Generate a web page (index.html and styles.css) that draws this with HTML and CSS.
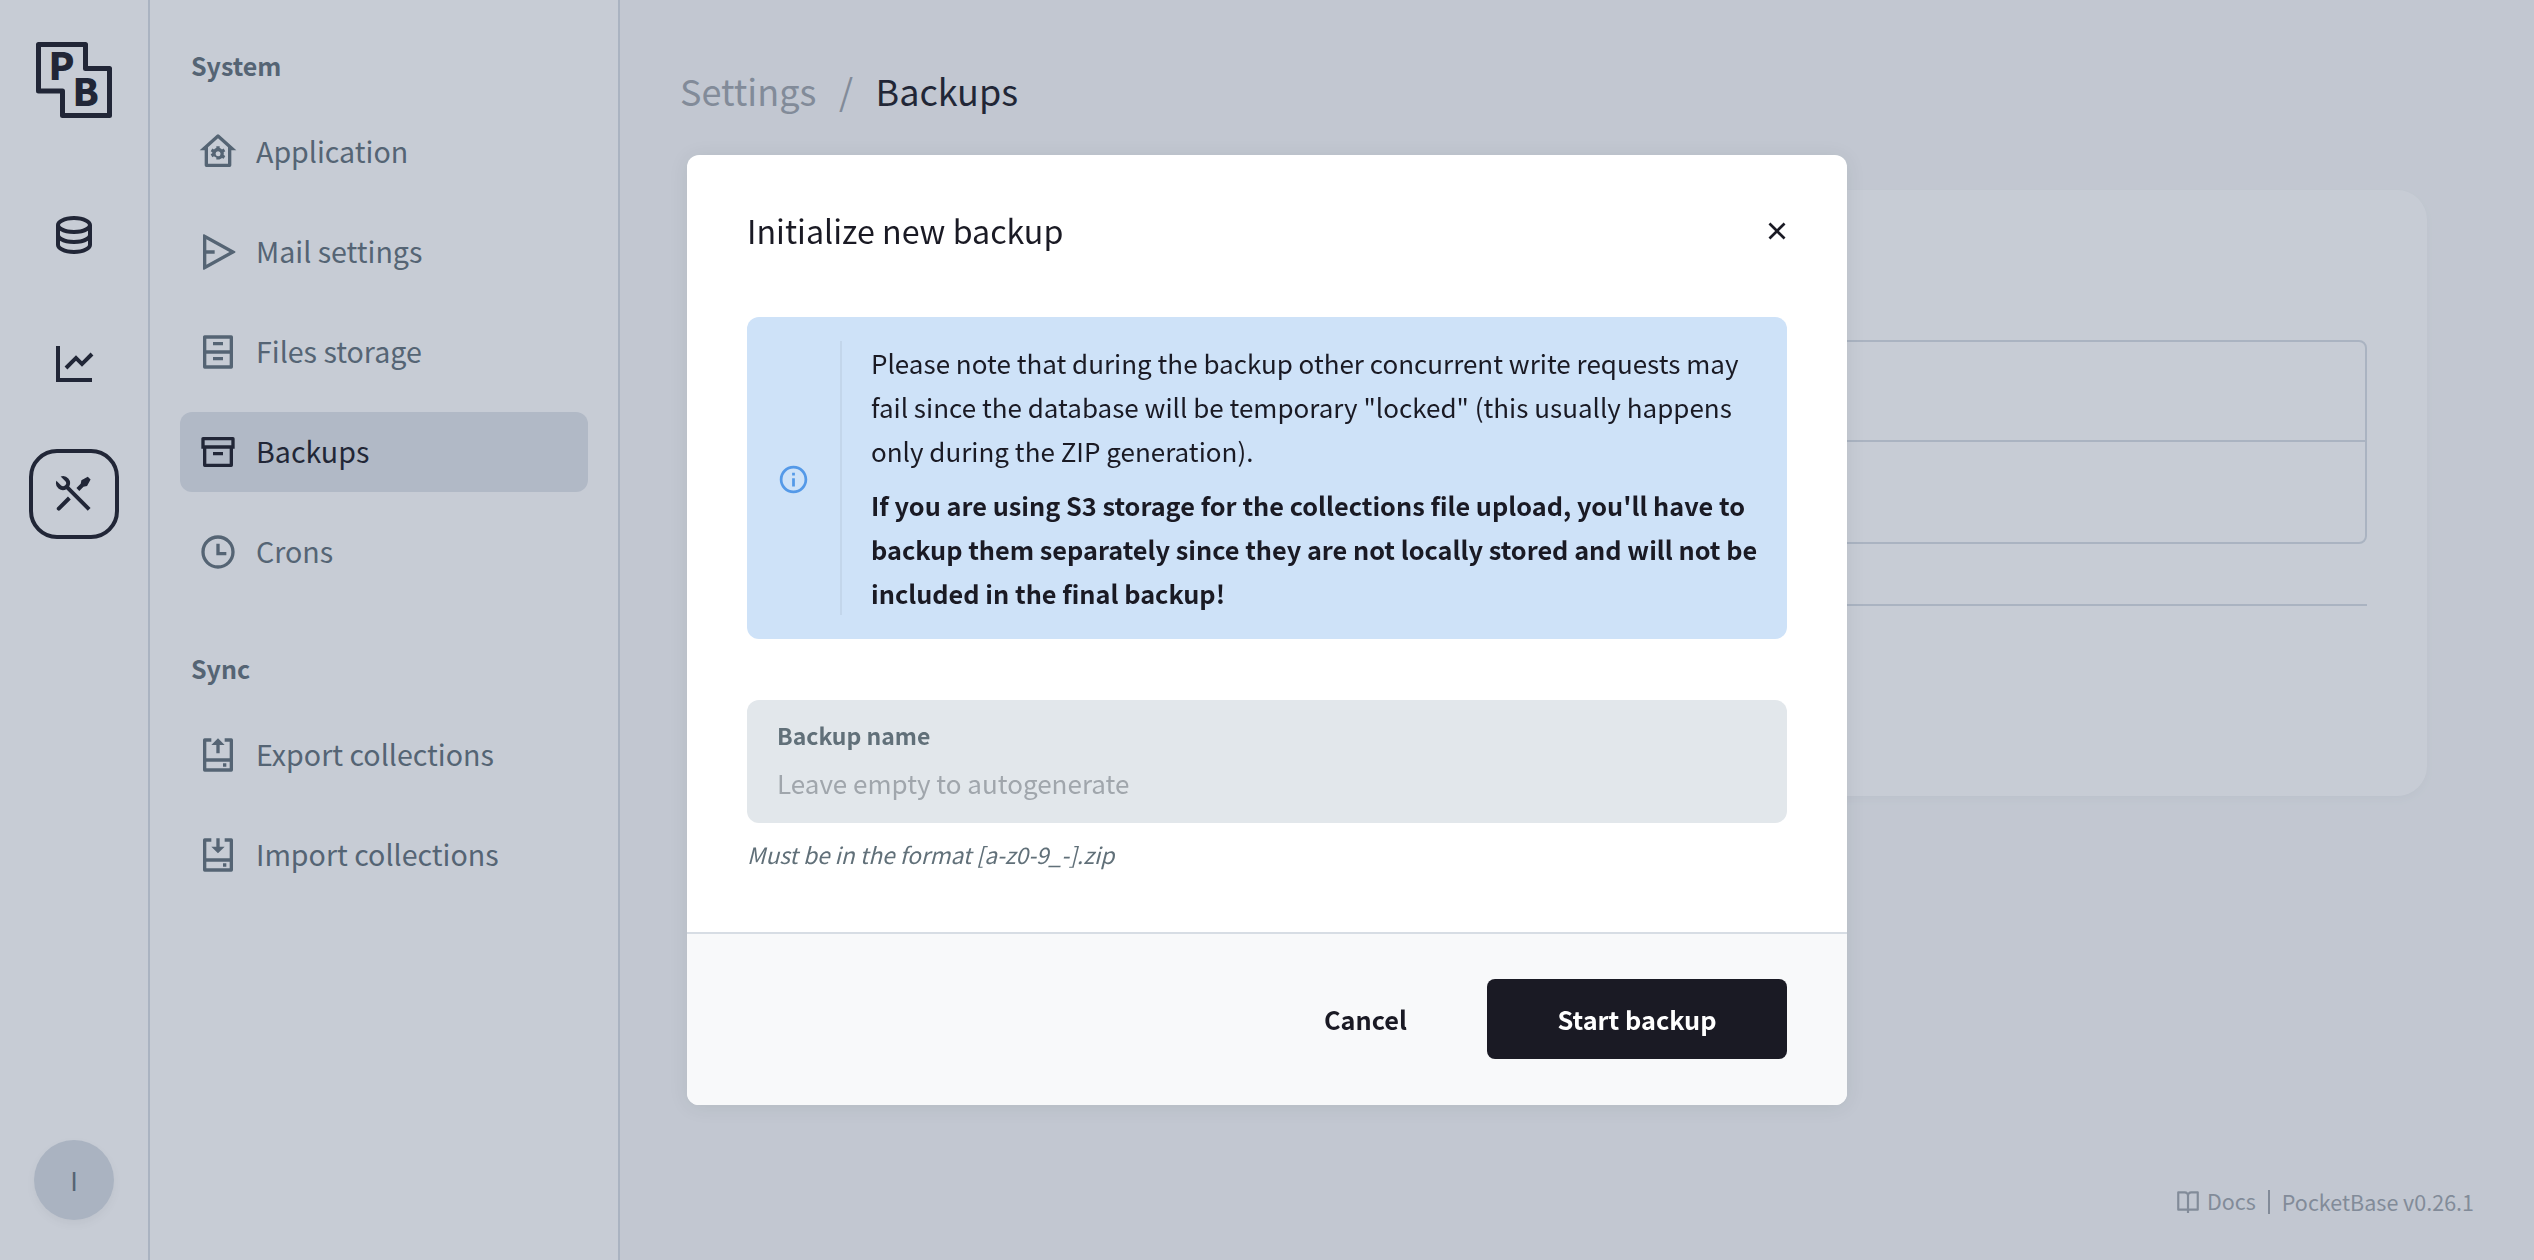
FILE: index.html
```html
<!DOCTYPE html>
<html lang="en">
<head>
    <meta charset="UTF-8">
    <title>Backups - PocketBase</title>
    <link rel="stylesheet" href="styles.css">
</head>
<body>
    <div class="app">
        <aside class="app-bar">
            <svg class="logo" viewBox="0 0 76 76">
                <path class="logo-line" d="M2.5 2.5H49.5V26.5H73.5V73.5H26.5V49H2.5Z"/>
                <text class="logo-letter" x="12.6" y="38">P</text>
                <text class="logo-letter" x="36.6" y="64">B</text>
            </svg>
            <nav class="app-nav">
                <a class="app-link"><svg class="icon-md" viewBox="0 0 24 24"><path d="M5 12.5c0 .313.461.858 1.53 1.393C7.914 14.585 9.877 15 12 15c2.123 0 4.086-.415 5.47-1.107 1.069-.535 1.53-1.08 1.53-1.393v-2.171C17.35 11.349 14.827 12 12 12s-5.35-.652-7-1.671V12.5zm14 2.829C17.35 16.349 14.827 17 12 17s-5.35-.652-7-1.671V17.5c0 .313.461.858 1.53 1.393C7.914 19.585 9.877 20 12 20c2.123 0 4.086-.415 5.47-1.107 1.069-.535 1.53-1.08 1.53-1.393v-2.171zM3 17.5v-10C3 5.015 7.03 3 12 3s9 2.015 9 4.5v10c0 2.485-4.03 4.5-9 4.5s-9-2.015-9-4.5zm9-7.5c2.123 0 4.086-.415 5.47-1.107C18.539 8.358 19 7.813 19 7.5c0-.313-.461-.858-1.53-1.393C16.086 5.415 14.123 5 12 5c-2.123 0-4.086.415-5.47 1.107C5.461 6.642 5 7.187 5 7.5c0 .313.461.858 1.53 1.393C7.914 9.585 9.877 10 12 10z"/></svg></a>
                <a class="app-link"><svg class="icon-md" viewBox="0 0 24 24"><path d="M5 3v16h16v2H3V3h2zm15.293 3.293l1.414 1.414L16 13.414l-3-2.999-4.293 4.292-1.414-1.414L13 7.586l3 2.999 4.293-4.292z"/></svg></a>
                <a class="app-link active"><svg class="icon-md" viewBox="0 0 24 24"><path d="M5.33 3.271a3.5 3.5 0 0 1 4.254 4.963l10.709 10.71-1.414 1.414-10.71-10.71a3.502 3.502 0 0 1-4.962-4.255L5.444 7.63a1.5 1.5 0 1 0 2.121-2.121L5.329 3.27zm10.367 1.884l3.182-1.768 1.414 1.414-1.768 3.182-1.768.354-2.12 2.121-1.415-1.414 2.121-2.121.354-1.768zm-6.718 8.132l1.414 1.414-5.303 5.303a1 1 0 0 1-1.492-1.327l.078-.087 5.303-5.303z"/></svg></a>
            </nav>
            <div class="avatar">I</div>
        </aside>

        <aside class="side-menu">
            <div class="menu-title">System</div>
            <div class="menu-group">
                <a class="menu-item"><svg class="menu-icon" viewBox="0 0 24 24"><path d="M19 21H5a1 1 0 0 1-1-1v-9H1l10.327-9.388a1 1 0 0 1 1.346 0L23 11h-3v9a1 1 0 0 1-1 1zM6 19h12V9.157l-6-5.454-6 5.454V19zm2.591-5.191a3.508 3.508 0 0 1 0-1.622l-.991-.572 1-1.732.991.573a3.495 3.495 0 0 1 1.404-.812V8.5h2v1.144c.532.159 1.01.44 1.404.812l.991-.573 1 1.731-.991.573a3.508 3.508 0 0 1 0 1.622l.991.572-1 1.732-.991-.573a3.495 3.495 0 0 1-1.404.812V16.5h-2v-1.144a3.495 3.495 0 0 1-1.404-.812l-.991.573-1-1.731.991-.573zm3.404.688a1.5 1.5 0 1 0 0-2.998 1.5 1.5 0 0 0 0 2.998z"/></svg><span class="menu-label">Application</span></a>
                <a class="menu-item"><svg class="menu-icon" viewBox="0 0 24 24"><path d="M3.741 1.408l18.462 10.154a.5.5 0 0 1 0 .876L3.741 22.592A.5.5 0 0 1 3 22.154V1.846a.5.5 0 0 1 .741-.438zM5 13v6.617L18.85 12 5 4.383V11h5v2H5z"/></svg><span class="menu-label">Mail settings</span></a>
                <a class="menu-item"><svg class="menu-icon" viewBox="0 0 24 24"><path d="M3 2.992C3 2.444 3.445 2 3.993 2h16.014a1 1 0 0 1 .993.992v18.016a.993.993 0 0 1-.993.992H3.993A1 1 0 0 1 3 21.008V2.992zM19 11V4H5v7h14zm0 2H5v7h14v-7zM9 6h6v2H9V6zm0 9h6v2H9v-2z"/></svg><span class="menu-label">Files storage</span></a>
                <a class="menu-item active"><svg class="menu-icon" viewBox="0 0 24 24"><path d="M3 10H2V4.003C2 3.449 2.455 3 2.992 3h18.016A.99.99 0 0 1 22 4.003V10h-1v10.001a.996.996 0 0 1-.993.999H3.993A.996.996 0 0 1 3 20.001V10zm16 0H5v9h14v-9zM4 5v3h16V5H4zm5 7h6v2H9v-2z"/></svg><span class="menu-label">Backups</span></a>
                <a class="menu-item"><svg class="menu-icon" viewBox="0 0 24 24"><path d="M12 22C6.477 22 2 17.523 2 12S6.477 2 12 2s10 4.477 10 10-4.477 10-10 10zm0-2a8 8 0 1 0 0-16 8 8 0 0 0 0 16zm1-8h4v2h-6V7h2v5z"/></svg><span class="menu-label">Crons</span></a>
            </div>
            <div class="menu-title menu-title-next">Sync</div>
            <div class="menu-group">
                <a class="menu-item"><svg class="menu-icon" viewBox="0 0 24 24"><path d="M8 2v2H5l-.001 10h14L19 4h-3V2h4a1 1 0 0 1 1 1v18a1 1 0 0 1-1 1H4a1 1 0 0 1-1-1V3a1 1 0 0 1 1-1h4zm10.999 14h-14L5 20h14l-.001-4zM17 17v2h-2v-2h2zM12 2l4 4h-3v5h-2V6H8l4-4z"/></svg><span class="menu-label">Export collections</span></a>
                <a class="menu-item"><svg class="menu-icon" viewBox="0 0 24 24"><path d="M8 2v2H5l-.001 10h14L19 4h-3V2h4a1 1 0 0 1 1 1v18a1 1 0 0 1-1 1H4a1 1 0 0 1-1-1V3a1 1 0 0 1 1-1h4zm10.999 14h-14L5 20h14l-.001-4zM17 17v2h-2v-2h2zM13 2v5h3l-4 4-4-4h3V2h2z"/></svg><span class="menu-label">Import collections</span></a>
            </div>
        </aside>

        <main class="page">
            <div class="breadcrumbs">
                <span class="crumb-muted">Settings</span>
                <span class="crumb-sep">/</span>
                <span class="crumb-current">Backups</span>
            </div>
            <section class="panel">
                <div class="backups-table">
                    <div class="backups-row"></div>
                    <div class="backups-row"></div>
                </div>
                <hr class="panel-line">
            </section>
            <footer class="page-footer">
                <a class="footer-link"><svg class="footer-icon" viewBox="0 0 24 24"><path d="M13 21v2h-2v-2H3a1 1 0 0 1-1-1V4a1 1 0 0 1 1-1h6a3.99 3.99 0 0 1 3 1.354A3.99 3.99 0 0 1 15 3h6a1 1 0 0 1 1 1v16a1 1 0 0 1-1 1h-8zm7-2V5h-5a2 2 0 0 0-2 2v12h7zm-9 0V7a2 2 0 0 0-2-2H4v14h7z"/></svg>Docs</a>
                <span class="footer-sep"></span>
                <span>PocketBase v0.26.1</span>
            </footer>
        </main>
    </div>

    <div class="overlay">
        <div class="modal">
            <div class="modal-head">
                <h4 class="modal-title">Initialize new backup</h4>
                <button class="modal-close" type="button"><svg viewBox="0 0 24 24"><path d="M12 10.586l4.95-4.95 1.414 1.414-4.95 4.95 4.95 4.95-1.414 1.414-4.95-4.95-4.95 4.95-1.414-1.414 4.95-4.95-4.95-4.95L7.05 5.636z"/></svg></button>
            </div>
            <div class="modal-body">
                <div class="alert">
                    <div class="alert-icon"><svg viewBox="0 0 24 24"><path d="M12 22C6.477 22 2 17.523 2 12S6.477 2 12 2s10 4.477 10 10-4.477 10-10 10zm0-2a8 8 0 1 0 0-16 8 8 0 0 0 0 16zM11 7h2v2h-2V7zm0 4h2v6h-2v-6z"/></svg></div>
                    <div class="alert-content">
                        <p>Please note that during the backup other concurrent write requests may fail since the database will be temporary "locked" (this usually happens only during the ZIP generation).</p>
                        <p class="alert-strong">If you are using S3 storage for the collections file upload, you'll have to backup them separately since they are not locally stored and will not be included in the final backup!</p>
                    </div>
                </div>
                <label class="field">
                    <span class="field-label">Backup name</span>
                    <input class="field-input" type="text" placeholder="Leave empty to autogenerate">
                </label>
                <div class="field-help">Must be in the format [a-z0-9_-].zip</div>
            </div>
            <div class="modal-foot">
                <button class="btn btn-plain" type="button">Cancel</button>
                <button class="btn btn-dark" type="button">Start backup</button>
            </div>
        </div>
    </div>
</body>
</html>
```

FILE: styles.css
```css
* {
    box-sizing: border-box;
}

html, body {
    height: 100%;
}

body {
    margin: 0;
    font-family: "Noto Sans CJK SC", "Noto Sans", sans-serif;
    font-size: 29px;
    line-height: 44px;
    color: #1a1a24;
    background-color: #f8f9fa;
    overflow: hidden;
}

svg {
    display: block;
    fill: currentColor;
}

.app {
    display: flex;
    height: 100%;
}

/* far left bar */
.app-bar {
    display: flex;
    flex-direction: column;
    align-items: center;
    flex: 0 0 150px;
    padding: 42px 0 40px;
    background-color: #fff;
    border-right: 2px solid #d7dde4;
}

.logo {
    width: 76px;
    height: 76px;
    overflow: visible;
}

.logo-line {
    fill: none;
    stroke: #1a1a24;
    stroke-width: 5;
    stroke-linejoin: round;
}

.logo-letter {
    font-size: 38px;
    font-weight: 900;
    fill: #1a1a24;
}

.app-nav {
    display: flex;
    flex-direction: column;
    gap: 40px;
    margin-top: 71px;
}

.app-link {
    display: flex;
    align-items: center;
    justify-content: center;
    width: 90px;
    height: 90px;
    border-radius: 28px;
    border: 4px solid transparent;
}

.app-link.active {
    border-color: #1a1a24;
}

.icon-md {
    width: 48px;
    height: 48px;
}

.avatar {
    display: flex;
    align-items: center;
    justify-content: center;
    width: 80px;
    height: 80px;
    margin-top: auto;
    border-radius: 50%;
    font-size: 26px;
    color: #617079;
    background-color: #d7dde4;
    box-shadow: 0 4px 10px rgba(0, 0, 0, 0.05);
}

/* settings menu */
.side-menu {
    flex: 0 0 470px;
    padding: 43px 30px 0;
    background-color: #fff;
    border-right: 2px solid #d7dde4;
}

.menu-title {
    margin: 0 0 25px 11px;
    font-size: 25px;
    font-weight: 700;
    color: #617079;
}

.menu-title-next {
    margin-top: 54px;
}

.menu-group {
    display: flex;
    flex-direction: column;
    gap: 20px;
}

.menu-item {
    display: flex;
    align-items: center;
    gap: 18px;
    height: 80px;
    padding: 0 18px;
    border-radius: 12px;
    font-size: 28.6px;
    color: #617079;
}

.menu-item.active {
    color: #1a1a24;
    background-color: #e1e5eb;
}

.menu-icon {
    width: 40px;
    height: 40px;
    flex-shrink: 0;
}

.menu-label {
    margin-bottom: 3px;
}

/* page behind the popup */
.page {
    display: flex;
    flex-direction: column;
    flex: 1;
    min-width: 0;
    padding: 0 60px;
}

.breadcrumbs {
    display: flex;
    align-items: center;
    gap: 22.5px;
    height: 44px;
    margin-top: 68px;
    font-size: 36px;
}

.crumb-muted, .crumb-sep {
    color: #a0a6ac;
}

.panel {
    align-self: center;
    width: 1700px;
    height: 606px;
    margin-top: 78px;
    padding: 150px 60px 0;
    border-radius: 30px;
    background-color: #fff;
    box-shadow: 0 4px 10px rgba(0, 0, 0, 0.03);
}

.backups-table {
    height: 204px;
    border: 2px solid #d7dde4;
    border-radius: 8px;
}

.backups-row {
    height: 98px;
}

.backups-row + .backups-row {
    height: 102px;
    border-top: 2px solid #d7dde4;
}

.panel-line {
    height: 2px;
    margin: 60px 0 0;
    border: 0;
    background-color: #d7dde4;
}

.page-footer {
    display: flex;
    align-items: center;
    justify-content: flex-end;
    gap: 12px;
    margin-top: auto;
    padding-bottom: 35px;
    font-size: 21.5px;
    color: #a0a6ac;
}

.footer-link {
    display: flex;
    align-items: center;
    gap: 6px;
    margin-bottom: 2px;
}

.footer-icon {
    width: 26px;
    height: 26px;
}

.footer-sep {
    width: 2px;
    height: 24px;
    background-color: #a0a6ac;
}

/* popup */
.overlay {
    position: fixed;
    top: 0;
    right: 0;
    bottom: 0;
    left: 0;
    display: flex;
    align-items: center;
    justify-content: center;
    background-color: rgba(53, 71, 104, 0.28);
}

.modal {
    width: 1160px;
    overflow: hidden;
    border-radius: 12px;
    background-color: #fff;
    box-shadow: 0 2px 20px rgba(0, 0, 0, 0.08);
}

.modal-head {
    display: flex;
    align-items: center;
    justify-content: space-between;
    padding: 54px 50px 1px 60px;
}

.modal-title {
    margin: 0 0 1px;
    font-size: 32.2px;
    line-height: 43px;
    font-weight: 400;
}

.modal-close {
    width: 40px;
    height: 40px;
    padding: 4px;
    border: 0;
    color: #1a1a24;
    background: none;
}

.modal-body {
    padding: 63px 60px 0;
}

.alert {
    display: flex;
    padding: 24px 20px 24px 0;
    border-radius: 12px;
    font-size: 26px;
    background-color: #cee2f8;
}

.alert-icon {
    display: flex;
    align-items: center;
    justify-content: center;
    flex: 0 0 93px;
    padding-top: 2px;
    color: #5499e8;
}

.alert-icon svg {
    width: 33px;
    height: 33px;
}

.alert-content {
    padding-left: 29px;
    border-left: 2px solid rgba(0, 0, 0, 0.05);
}

.alert-content p {
    margin: 0;
}

.alert-content p + p {
    margin-top: 10px;
}

.alert-strong {
    font-size: 25.3px;
    font-weight: 700;
}

.field {
    display: block;
    height: 123px;
    margin-top: 61px;
    padding: 13px 30px 0;
    border-radius: 12px;
    background-color: #e2e7eb;
}

.field-label {
    display: block;
    font-size: 23px;
    font-weight: 700;
    color: #617079;
}

.field-input {
    display: block;
    width: 100%;
    height: 50px;
    padding: 0;
    border: 0;
    outline: 0;
    font: inherit;
    font-size: 26px;
    background: none;
}

.field-input::placeholder {
    color: #a0a6ac;
    opacity: 1;
}

.field-help {
    margin-top: 10px;
    font-size: 22.7px;
    font-style: italic;
    color: #617079;
}

.modal-foot {
    display: flex;
    justify-content: flex-end;
    gap: 40px;
    margin-top: 55px;
    padding: 45px 60px 46px;
    border-top: 2px solid #d7dde4;
    background-color: #f8f9fa;
}

.btn {
    height: 80px;
    padding-bottom: 1px;
    border: 0;
    border-radius: 8px;
    font: inherit;
    font-size: 25.3px;
    font-weight: 700;
}

.btn-plain {
    padding-left: 40px;
    padding-right: 40px;
    color: #1a1a24;
    background: none;
}

.btn-dark {
    width: 300px;
    color: #fff;
    background-color: #1a1a24;
}
```
